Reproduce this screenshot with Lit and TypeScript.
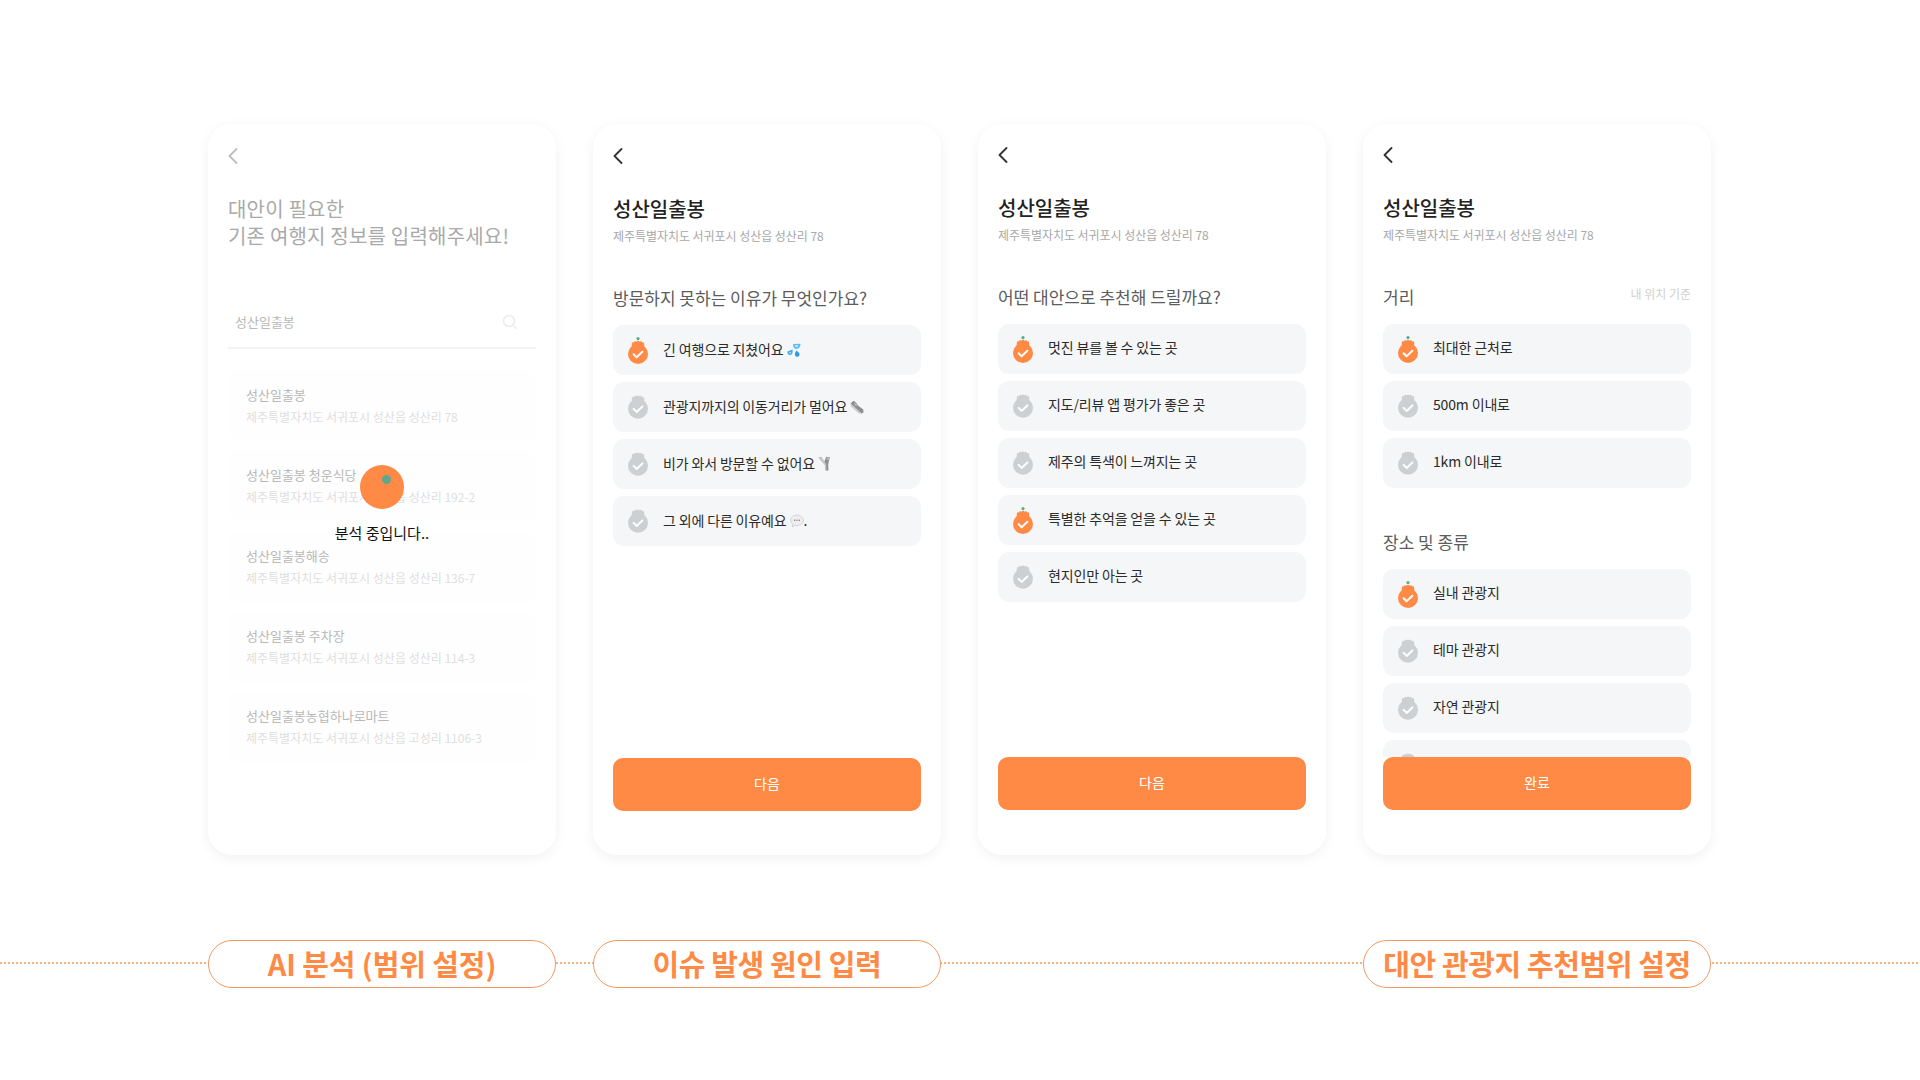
import { LitElement, html, css, svg } from "lit";
import { customElement } from "lit/decorators.js";

const icon = (on: boolean) => {
  const c = on ? "#FF8A45" : "#CDD0D2";
  const cy = on ? 18 : 15.7;
  const t = cy - 13;
  return html`<svg class="ic" width="20" height="28" viewBox="0 0 20 28">
    ${on ? svg`<circle cx="10" cy="2.6" r="1.6" fill="#5FA78E"></circle>` : ""}
    <path d="M3.8 ${t + 6}V${t + 2.4}a1.4 1.4 0 0 1 2-.8a1.6 1.6 0 0 1 2.8-.9a1.6 1.6 0 0 1 2.8 0a1.6 1.6 0 0 1 2.8.9a1.4 1.4 0 0 1 2 .8V${t + 6}Z" fill="${c}"></path>
    <circle cx="10" cy="${cy}" r="10" fill="${c}"></circle>
    <path d="M5.6 ${cy + 0.2}l3 3l5.800-5.400" fill="none" stroke="#fff" stroke-width="2" stroke-linecap="round" stroke-linejoin="round"></path>
  </svg>`;
};

const drops = html`<svg class="em" width="14" height="14" viewBox="0 0 14 14">
  <path d="M.5 8.500L5.500 6.500C6 9.500 5.500 11.800 3.200 12C1.200 12.200 .2 10.500 .5 8.500Z" fill="#3FA9EE"></path>
  <path d="M6 1L13.500 .8C13.500 4 11.500 6 9 6C7 6 6 3.500 6 1Z" fill="#5CBBF2"></path>
  <path d="M9.500 7.500C10.800 8.800 12.500 9.800 12.500 11.500C12.500 13 11.300 13.800 10.200 13.800C8.800 13.800 7.800 12.700 7.900 11.300C8 10 8.800 8.700 9.500 7.500Z" fill="#2C9BE6"></path>
  <path d="M8 2.200L11.200 2.200C11 3.600 10 4.300 9.100 4.100C8.500 4 8.100 3.100 8 2.200Z" fill="#D5EEFC"></path>
  <path d="M2.200 9.500L4 8.800C4.100 10 3.600 10.700 3 10.700C2.400 10.700 2.100 10.200 2.200 9.500Z" fill="#CDEAFB"></path>
</svg>`;
const shoe = html`<svg class="em" width="14" height="14" viewBox="0 0 14 14">
  <path d="M.5 3.500L3.500.8L6 2.500L8 5.500L13.200 9.500L13.500 12.500L11.500 13.500Z" fill="#8b8d8f"></path>
  <path d="M.5 3.500L11.500 13.500L9 13.500L.8 6.500Z" fill="#c9cbcd"></path>
  <path d="M5 2.500L7.500 5.500L6 6.500L3.800 3.800Z" fill="#b3b5b7"></path>
</svg>`;
const sling = html`<svg class="em" width="13" height="15" viewBox="0 0 13 15">
  <path d="M.5 1.500L3.500 1.200L6.200 6L8.200 .8L11.800 1.200L10.200 8.500L10.500 14.500L7.500 14.500L7 9Z" fill="#8f9193"></path>
  <path d="M.5 1.500L7 9L7.500 14.500L8.500 14.500L8.200 8.500L3.500 1.200Z" fill="#c6c8c9"></path>
  <circle cx="10" cy="2.500" r="1.500" fill="#b5b7b9"></circle>
</svg>`;
const bubble = html`<svg class="em" width="14" height="14" viewBox="0 0 14 14">
  <path d="M7 1c3.500 0 6.300 2.300 6.300 5.300S10.500 11.500 7 11.500c-.7 0-1.300-.1-1.900-.2L2.500 13l.3-2.800C1.500 9.300.7 7.900.7 6.300C.7 3.300 3.500 1 7 1Z" fill="#ECEEEF" stroke="#C9CBCD" stroke-width=".8"></path>
  <g fill="#777"><circle cx="4.700" cy="6.300" r=".7"></circle><circle cx="7" cy="6.300" r=".7"></circle><circle cx="9.300" cy="6.300" r=".7"></circle></g>
</svg>`;

const chevron = html`<svg class="back" width="10" height="16" viewBox="0 0 10 16"><path d="M8.500 1L1.500 8l7 7" fill="none" stroke="currentColor" stroke-width="1.800" stroke-linecap="round" stroke-linejoin="round"></path></svg>`;

const opt = (on: boolean, text: string, em: unknown = "", tail = "") =>
  html`<div class="opt">${icon(on)}<span class="opt-t">${text}</span>${em ? html`<span class="em-w">${em}</span>` : ""}<span class="opt-t">${tail}</span></div>`;

const place = (a: string, b: string) =>
  html`<div class="item"><div class="item-t">${a}</div><div class="item-a">${b}</div></div>`;

const header = html`<div class="title">성산일출봉</div><div class="addr">제주특별자치도 서귀포시 성산읍 성산리 78</div>`;

@customElement("app-root")
export class AppRoot extends LitElement {
  static styles = css`
    :host {
      display: block;
      width: 1920px;
      height: 1080px;
      background: #fff;
      overflow: hidden;
      font-family: "Noto Sans CJK KR", "Noto Sans", sans-serif;
      color: #222;
    }
    .cards {
      display: flex;
      gap: 37px;
      padding: 124px 0 0 208px;
    }
    .card {
      position: relative;
      box-sizing: border-box;
      width: 348px;
      height: 731px;
      padding: 20px 20px 44px;
      border-radius: 24px;
      background: #fff;
      box-shadow: 0 3px 13px rgba(0, 0, 0, 0.06);
      display: flex;
      flex-direction: column;
    }
    .card.up {
      padding-top: 19px;
      padding-bottom: 45px;
    }
    .back-row {
      height: 24px;
      display: flex;
      align-items: center;
      color: #333;
      flex: none;
    }
    .faded .back-row {
      color: #bdbdbd;
    }
    .title {
      margin-top: 27px;
      font-size: 20px;
      line-height: 28px;
      font-weight: 500;
      color: #222;
    }
    .addr {
      margin-top: 4px;
      font-size: 12px;
      line-height: 18px;
      letter-spacing: -0.05px;
      color: #a8a8a8;
    }
    .q {
      margin-top: 40px;
      font-size: 17px;
      line-height: 26px;
      color: #5c5c5c;
      display: flex;
      justify-content: space-between;
      flex: none;
    }
    .q.second {
      margin-top: 41px;
    }
    .q small {
      font-size: 12px;
      line-height: 20px;
      color: #d0d0d0;
    }
    .opts {
      margin-top: 14px;
      display: flex;
      flex-direction: column;
      gap: 7px;
    }
    .opt {
      flex: none;
      height: 50px;
      box-sizing: border-box;
      padding-left: 15px;
      border-radius: 11px;
      background: #f5f6f7;
      display: flex;
      align-items: center;
      font-size: 14px;
      color: #2b2b2b;
    }
    .ic {
      flex: none;
      margin-right: 15px;
    }
    .opt-t {
      letter-spacing: -0.15px;
      padding-bottom: 3px;
    }
    .up .opt-t {
      padding-bottom: 5px;
    }
    .em-w {
      display: inline-flex;
      margin-left: 3px;
      padding-bottom: 1px;
    }
    .scroll {
      flex: 1;
      min-height: 0;
      overflow: hidden;
    }
    .spacer {
      flex: 1;
    }
    .btn {
      flex: none;
      height: 53px;
      box-sizing: border-box;
      padding-bottom: 4px;
      border-radius: 10px;
      background: #ff8a45;
      color: #fff;
      font-size: 14px;
      display: flex;
      align-items: center;
      justify-content: center;
    }
    .head {
      margin-top: 27px;
      font-size: 20px;
      line-height: 27px;
      letter-spacing: 0.2px;
      color: #a9a9a9;
    }
    .search {
      margin-top: 50px;
      height: 50px;
      box-sizing: border-box;
      padding: 0 18px 3px 7px;
      border-bottom: 2px solid #f3f3f3;
      display: flex;
      align-items: center;
      justify-content: space-between;
      font-size: 13px;
      color: #b8b8b8;
    }
    .list {
      margin-top: 22px;
      display: flex;
      flex-direction: column;
      gap: 10.3px;
    }
    .item {
      height: 70px;
      box-sizing: border-box;
      padding: 13px 18px 0;
      border-radius: 10px;
      background: #fefefe;
    }
    .item-t {
      font-size: 13px;
      line-height: 22px;
      color: #b8b8b8;
    }
    .item-a {
      margin-top: 1px;
      font-size: 12px;
      line-height: 20px;
      color: #dedede;
    }
    .loader {
      position: absolute;
      left: 0;
      right: 0;
      top: 341px;
      display: flex;
      flex-direction: column;
      align-items: center;
    }
    .orb {
      position: relative;
      width: 44px;
      height: 44px;
      border-radius: 50%;
      background: #ff8a45;
    }
    .orb i {
      position: absolute;
      left: 22px;
      top: 10px;
      width: 9px;
      height: 9px;
      border-radius: 50%;
      background: #5fa78e;
    }
    .loader span {
      margin-top: 13px;
      font-size: 15px;
      line-height: 22px;
      color: #111;
    }
    .pills {
      position: relative;
      margin-top: 85px;
      display: flex;
      gap: 37px;
      padding-left: 208px;
    }
    .pills::before {
      content: "";
      position: absolute;
      left: 0;
      right: 0;
      top: 22px;
      height: 2px;
      background: repeating-linear-gradient(90deg, #f6b186 0 2px, transparent 2px 4px);
    }
    .pill {
      position: relative;
      box-sizing: border-box;
      width: 348px;
      height: 48px;
      padding-bottom: 3px;
      border: 1px solid #f09a63;
      border-radius: 24px;
      background: #fff;
      color: #ff8a45;
      font-size: 29px;
      font-weight: 700;
      letter-spacing: -0.4px;
      display: flex;
      align-items: center;
      justify-content: center;
    }
    .pill.wide {
      letter-spacing: -0.1px;
    }
    .pill.none {
      visibility: hidden;
    }
  `;

  render() {
    return html`
      <div class="cards">
        <section class="card faded">
          <div class="back-row">${chevron}</div>
          <div class="head">대안이 필요한<br />기존 여행지 정보를 입력해주세요!</div>
          <div class="search">
            <span>성산일출봉</span>
            <svg width="16" height="16" viewBox="0 0 16 16" fill="none" stroke="#ececec" stroke-width="1.500"><circle cx="7" cy="7" r="5.500"></circle><path d="M11 11l4 4"></path></svg>
          </div>
          <div class="list">
            ${place("성산일출봉", "제주특별자치도 서귀포시 성산읍 성산리 78")}
            ${place("성산일출봉 청운식당", "제주특별자치도 서귀포시 성산읍 성산리 192-2")}
            ${place("성산일출봉해송", "제주특별자치도 서귀포시 성산읍 성산리 136-7")}
            ${place("성산일출봉 주차장", "제주특별자치도 서귀포시 성산읍 성산리 114-3")}
            ${place("성산일출봉농협하나로마트", "제주특별자치도 서귀포시 성산읍 고성리 1106-3")}
          </div>
          <div class="loader">
            <div class="orb"><i></i></div>
            <span>분석 중입니다..</span>
          </div>
        </section>

        <section class="card">
          <div class="back-row">${chevron}</div>
          ${header}
          <div class="q">방문하지 못하는 이유가 무엇인가요?</div>
          <div class="opts">
            ${opt(true, "긴 여행으로 지쳤어요", drops)}
            ${opt(false, "관광지까지의 이동거리가 멀어요", shoe)}
            ${opt(false, "비가 와서 방문할 수 없어요", sling)}
            ${opt(false, "그 외에 다른 이유예요", bubble, ".")}
          </div>
          <div class="spacer"></div>
          <div class="btn">다음</div>
        </section>

        <section class="card up">
          <div class="back-row">${chevron}</div>
          ${header}
          <div class="q">어떤 대안으로 추천해 드릴까요?</div>
          <div class="opts">
            ${opt(true, "멋진 뷰를 볼 수 있는 곳")}
            ${opt(false, "지도/리뷰 앱 평가가 좋은 곳")}
            ${opt(false, "제주의 특색이 느껴지는 곳")}
            ${opt(true, "특별한 추억을 얻을 수 있는 곳")}
            ${opt(false, "현지인만 아는 곳")}
          </div>
          <div class="spacer"></div>
          <div class="btn">다음</div>
        </section>

        <section class="card up">
          <div class="back-row">${chevron}</div>
          ${header}
          <div class="scroll">
            <div class="q"><span>거리</span><small>내 위치 기준</small></div>
            <div class="opts">
              ${opt(true, "최대한 근처로")}
              ${opt(false, "500m 이내로")}
              ${opt(false, "1km 이내로")}
            </div>
            <div class="q second">장소 및 종류</div>
            <div class="opts">
              ${opt(true, "실내 관광지")}
              ${opt(false, "테마 관광지")}
              ${opt(false, "자연 관광지")}
              <div class="opt">${icon(false)}</div>
            </div>
          </div>
          <div class="btn">완료</div>
        </section>
      </div>

      <div class="pills">
        <div class="pill wide">AI 분석 (범위 설정)</div>
        <div class="pill">이슈 발생 원인 입력</div>
        <div class="pill none"></div>
        <div class="pill">대안 관광지 추천범위 설정</div>
      </div>
    `;
  }
}
